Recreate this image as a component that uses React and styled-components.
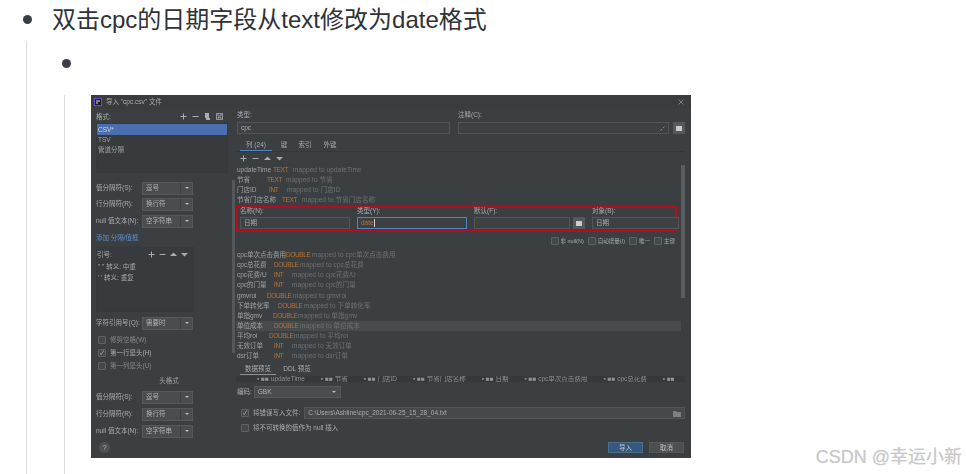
import React from 'react'
import styled, { createGlobalStyle } from 'styled-components'

const Global = createGlobalStyle`
  html, body { margin: 0; padding: 0; background: #fff; }
  body {
    width: 966px;
    height: 474px;
    overflow: hidden;
    font-family: "Liberation Sans", "Noto Sans CJK SC", sans-serif;
  }
`

const Page = styled.div`
  position: relative;
  width: 966px;
  height: 474px;
  overflow: hidden;
`

const Item = styled.div`
  display: flex;
  align-items: center;
  height: ${p => p.$h}px;
  color: #2f3237;
  font-size: 24px;
  span { padding-bottom: 3px; }
`

const Bullet = styled.i`
  flex: none;
  width: 9px;
  height: 9px;
  border-radius: 50%;
  background: #3a3f45;
  margin-left: ${p => p.$ml}px;
  margin-right: 20px;
`

const Quote = styled.div`
  margin-left: ${p => p.$ml}px;
  margin-top: ${p => p.$mt}px;
  border-left: 1px solid #dcdcdc;
  height: 500px;
`

const Dialog = styled.div`
  width: 600px;
  height: 363px;
  margin-left: 26px;
  margin-top: 10px;
  background: #3c3f41;
  color: #a9acae;
  font-size: 6.5px;
  line-height: 10px;
  display: flex;
  flex-direction: column;
  filter: blur(0.45px);
`

const TitleBar = styled.div`
  flex: none;
  height: 14px;
  display: flex;
  align-items: center;
  gap: 4px;
  padding: 0 7px 0 3px;
  background: #3a3c3e;
  span { flex: 1; }
`

const Body = styled.div`
  flex: none;
  height: 331px;
  display: flex;
`

const LeftCol = styled.div`
  flex: none;
  width: 141px;
  box-sizing: border-box;
  padding: 0 4px 0 5px;
  display: flex;
  flex-direction: column;
`

const Track = styled.div`
  flex: none;
  width: 3px;
  margin-right: 1px;
  i {
    display: block;
    margin-top: 71px;
    height: 173px;
    background: #55585a;
  }
`

const RightCol = styled.div`
  position: relative;
  flex: 1;
  min-width: 0;
  padding-right: 6px;
  display: flex;
  flex-direction: column;
`

const RightThumb = styled.i`
  position: absolute;
  top: 56px;
  right: 6px;
  width: 4px;
  height: 133px;
  background: #5a5d5f;
`

const Head = styled.div`
  flex: none;
  height: 13px;
  margin-top: ${p => p.$mt || 0}px;
  display: flex;
  align-items: center;
  justify-content: space-between;
  padding-right: ${p => p.$pr || 0}px;
`

const Tools = styled.div`
  display: flex;
  align-items: center;
  gap: ${p => p.$gap || 5}px;
  color: #a9adb0;
  margin-left: ${p => p.$ml || 0}px;
`

const ListBox = styled.div`
  flex: none;
  height: 50px;
  background: #383b3d;
  border: 1px solid #36393a;
  box-sizing: border-box;
`

const ListRow = styled.div`
  height: ${p => (p.$on ? 11 : 10)}px;
  line-height: ${p => (p.$on ? 11 : 10)}px;
  padding-left: 1px;
  background: ${p => (p.$on ? '#4b6eaf' : 'transparent')};
  color: ${p => (p.$on ? '#cdd4e0' : '#a0a3a5')};
`

const FormRow = styled.div`
  flex: none;
  height: 14px;
  margin-top: ${p => p.$mt}px;
  display: flex;
  align-items: center;
  label { width: 46px; flex: none; }
`

const Select = styled.div`
  flex: none;
  box-sizing: border-box;
  width: ${p => p.$w || 51}px;
  height: ${p => p.$h || 13}px;
  background: #4a4d4f;
  border: 1px solid #56595b;
  display: flex;
  align-items: center;
  padding-left: 3px;
  color: #b0b3b5;
  span { flex: 1; }
  b {
    width: 11px;
    height: 100%;
    flex: none;
    border-left: 1px solid ${p => (p.$plain ? 'transparent' : '#3c3f41')};
    display: flex;
    align-items: center;
    justify-content: center;
  }
  b::after {
    content: "";
    border-left: 2.5px solid transparent;
    border-right: 2.5px solid transparent;
    border-top: 2.5px solid #b9bcbe;
  }
`

const LinkRow = styled.div`
  flex: none;
  height: 10px;
  margin-top: 5px;
  color: #5b8fc9;
`

const QuoteBox = styled.div`
  flex: none;
  height: 65px;
  width: 98px;
  margin-top: 4px;
  box-sizing: border-box;
  padding: 0 5px 0 0;
  background: #383b3d;
  border: 1px solid #36393a;
`

const QuoteRow = styled.div`
  height: 11px;
  line-height: 11px;
  padding-left: 1px;
`

const CheckRow = styled.div`
  flex: none;
  height: ${p => p.$h || 10}px;
  margin-top: ${p => p.$mt}px;
  padding-left: ${p => p.$pl || 0}px;
  display: flex;
  align-items: center;
  gap: 4px;
  color: ${p => (p.$dim ? '#85888a' : '#a9acae')};
`

const Box = styled.i`
  flex: none;
  width: 6px;
  height: 6px;
  border: 1px solid #5f6264;
  background: #45484a;
  border-radius: 1px;
  color: #c2c5c7;
  font-size: 6px;
  line-height: 6px;
  font-style: normal;
  text-align: center;
`

const Caption = styled.div`
  flex: none;
  height: 10px;
  margin-top: 5px;
  text-align: center;
  padding-left: 14px;
  color: #a0a3a5;
`

const Footer = styled.div`
  flex: none;
  height: 18px;
  box-sizing: border-box;
  padding: 2px 7px 0 8px;
  display: flex;
  align-items: flex-start;
  justify-content: space-between;
`

const Help = styled.div`
  width: 11px;
  height: 11px;
  border-radius: 50%;
  background: #4d5153;
  color: #a9adb0;
  font-size: 8px;
  line-height: 11px;
  text-align: center;
`

const Buttons = styled.div`
  display: flex;
  gap: 6px;
`

const Button = styled.div`
  width: 35px;
  height: 11px;
  line-height: 10px;
  text-align: center;
  background: ${p => (p.$primary ? '#365880' : '#4c5052')};
  border: 1px solid ${p => (p.$primary ? '#4c708c' : '#55585a')};
  box-sizing: border-box;
  color: #bfc2c4;
`

const FieldGrid = styled.div`
  flex: none;
  display: grid;
  grid-template-columns: 213px 211px 12px;
  column-gap: 8px;
  margin-top: ${p => p.$mt || 0}px;
  padding-left: 1px;
  height: ${p => p.$h}px;
  align-items: center;
  & > :nth-child(3) { margin-left: -4px; }
`

const Input = styled.div`
  box-sizing: border-box;
  height: 12px;
  line-height: 10px;
  padding: 0 3px;
  background: #3e4143;
  border: 1px solid ${p => (p.$focus ? '#4a88c7' : '#525557')};
  display: flex;
  align-items: center;
  justify-content: space-between;
  color: ${p => (p.$orange ? '#b5722f' : '#a9acae')};
  min-width: 0;
`

const IconBtn = styled.div`
  width: 12px;
  height: 12px;
  background: #55595b;
  display: flex;
  align-items: center;
  justify-content: center;
  i { width: 6px; height: 5px; background: #c9cccd; display: block; }
`

const Tabs = styled.div`
  flex: none;
  height: 12px;
  margin-top: ${p => p.$mt}px;
  padding-left: 4px;
  display: flex;
  gap: ${p => p.$gap}px;
  border-bottom: ${p => (p.$line ? '1px solid #353739' : 'none')};
`

const Tab = styled.div`
  width: ${p => p.$w}px;
  text-align: center;
  line-height: 11px;
  height: 11px;
  border-bottom: 1.5px solid transparent;
  border-color: ${p => (p.$on ? (p.$grey ? '#8c8f91' : '#4a88c7') : 'transparent')};
`

const Toolbar = styled.div`
  flex: none;
  height: 12px;
  padding-left: 4px;
  display: flex;
  align-items: center;
  border-bottom: 1px solid #393c3e;
`

const Columns = styled.div`
  flex: none;
  margin-top: ${p => p.$mt}px;
  height: ${p => p.$h}px;
  overflow: hidden;
`

const ColRow = styled.div`
  height: ${p => p.$step}px;
  line-height: ${p => p.$step}px;
  padding-left: 1px;
  display: flex;
  white-space: nowrap;
  margin-right: 4px;
  background: ${p => (p.$on ? '#484b4d' : 'transparent')};
`

const ColName = styled.span`
  width: ${p => p.$w}px;
  flex: none;
  color: #a0a3a5;
`

const ColType = styled.span`
  width: ${p => p.$w}px;
  flex: none;
  color: #b5722f;
  letter-spacing: -0.4px;
`

const ColMap = styled.span`
  color: #6f7274;
  letter-spacing: 0.1px;
`

const RedBox = styled.div`
  flex: none;
  width: 441px;
  height: 26px;
  box-sizing: border-box;
  margin-top: 1px;
  border: 2px solid #bb0a1e;
  padding: 0 2px;
  display: grid;
  grid-template-columns: 110px 110px 96px 12px 83px;
  grid-template-rows: 9px 12px;
  column-gap: 7px;
  line-height: 6px;
  & > :nth-child(4), & > :nth-child(5) { margin-left: -4px; }
  & > :nth-child(9), & > :nth-child(10) { margin-left: -4px; }
`

const Options = styled.div`
  flex: none;
  height: 10px;
  margin-top: 4px;
  padding-right: 10px;
  display: flex;
  justify-content: flex-end;
  align-items: center;
  gap: 4px;
  font-size: 5.5px;
  span { display: flex; align-items: center; gap: 2px; }
`

const Caret = styled.span`
  display: inline-block;
  width: 1px;
  height: 8px;
  background: #d0d0d0;
  vertical-align: middle;
`

const Band = styled.div`
  flex: none;
  height: 6px;
  margin-top: 1px;
  background: #36383a;
  overflow: hidden;
  white-space: nowrap;
  padding-left: 21px;
  line-height: 6px;
  color: #8f9294;
  span { margin-right: 16px; }
`

const EncodingRow = styled.div`
  flex: none;
  height: 12px;
  margin-top: 4px;
  padding-left: 1px;
  display: flex;
  align-items: center;
  gap: 2px;
`

const PathRow = styled.div`
  flex: none;
  height: 12px;
  margin-top: 9px;
  padding-left: 5px;
  display: flex;
  align-items: center;
  gap: 4px;
`

const PathInput = styled(Input)`
  flex: 1;
  background: #45494b;
`

const Watermark = styled.div`
  position: absolute;
  right: 4px;
  bottom: 6px;
  font-size: 18px;
  line-height: 22px;
  color: #c8c8c8;
  text-shadow: 0 0 1px #ddd;
  white-space: nowrap;
`

const Plus = () => (
  <svg width="7" height="7" viewBox="0 0 7 7"><path d="M3.5 0.5v6M0.5 3.5h6" stroke="currentColor" strokeWidth="1" /></svg>
)
const Minus = () => (
  <svg width="7" height="7" viewBox="0 0 7 7"><path d="M0.5 3.5h6" stroke="currentColor" strokeWidth="1" /></svg>
)
const Up = () => (
  <svg width="7" height="7" viewBox="0 0 7 7"><path d="M3.5 1.5L7 5H0z" fill="currentColor" /></svg>
)
const Down = () => (
  <svg width="7" height="7" viewBox="0 0 7 7"><path d="M3.5 5.5L7 2H0z" fill="currentColor" /></svg>
)
const Copy = () => (
  <svg width="7" height="7" viewBox="0 0 7 7"><path d="M1 0h4v5H1zM2 5h4v2H2z" fill="currentColor" /></svg>
)
const Save = () => (
  <svg width="7" height="7" viewBox="0 0 7 7"><path d="M0.5 0.5h6v6h-6zM2 1v2h3V1M2 6V4.5h3V6" fill="none" stroke="currentColor" strokeWidth="0.8" /></svg>
)
const AppIcon = () => (
  <svg width="8" height="8" viewBox="0 0 8 8">
    <rect width="8" height="8" fill="#6b4fc8" />
    <rect x="1" y="1" width="6" height="6" fill="#1c1c24" />
    <path d="M2 3h4M2 5h2" stroke="#e0e0e0" strokeWidth="1" />
  </svg>
)
const CloseIcon = () => (
  <svg width="6" height="6" viewBox="0 0 6 6"><path d="M0.5 0.5l5 5M5.5 0.5l-5 5" stroke="#8b8e90" strokeWidth="0.8" /></svg>
)
const Expand = () => (
  <svg width="5" height="5" viewBox="0 0 5 5"><path d="M0.5 4.5l1.5-1.5M4.5 0.5L3 2" stroke="#9a9d9f" strokeWidth="0.8" /></svg>
)
const Folder = () => (
  <svg width="8" height="7" viewBox="0 0 8 7"><path d="M0 1h3l1 1h4v5H0z" fill="#7c8083" /></svg>
)

const topCols = [
  ['updateTime', 'TEXT', 36, 20, 'updateTime'],
  ['节省', 'TEXT', 30, 19, '节省'],
  ['门店ID', 'INT', 32, 18, '门店ID'],
  ['节省门店名称', 'TEXT', 45, 20, '节省门店名称'],
]

const bottomCols = [
  ['cpc单次点击费用', 'DOUBLE', 49, 26, 'cpc单次点击费用'],
  ['cpc总花费', 'DOUBLE', 37, 26, 'cpc总花费'],
  ['cpc花费/U', 'INT', 37, 18, 'cpc花费/U'],
  ['cpc的门量', 'INT', 37, 18, 'cpc的门量'],
  ['gmvroi', 'DOUBLE', 30, 26, 'gmvroi'],
  ['下单转化率', 'DOUBLE', 41, 26, '下单转化率'],
  ['单指gmv', 'DOUBLE', 36, 25, '单指gmv'],
  ['单位成本', 'DOUBLE', 37, 26, '单位成本', true],
  ['平均roi', 'DOUBLE', 32, 25, '平均roi'],
  ['无效订单', 'INT', 37, 18, '无效订单'],
  ['dsr订单', 'INT', 37, 18, 'dsr订单'],
]

const ColumnRow = ({ col, step }) => (
  <ColRow $step={step} $on={col[5]}>
    <ColName $w={col[2]}>{col[0]}</ColName>
    <ColType $w={col[3]}>{col[1]}</ColType>
    <ColMap>mapped to {col[4]}</ColMap>
  </ColRow>
)

const SelectRow = ({ label, value, mt }) => (
  <FormRow $mt={mt}>
    <label>{label}</label>
    <Select><span>{value}</span><b /></Select>
  </FormRow>
)

export default function App() {
  return (
    <Page>
      <Global />
      <Item $h={38}>
        <Bullet $ml={23} />
        <span>双击cpc的日期字段从text修改为date格式</span>
      </Item>
      <Quote $ml={26} $mt={3}>
        <Item $h={44}>
          <Bullet $ml={35} />
        </Item>
        <Quote $ml={37} $mt={0}>
          <Dialog>
            <TitleBar>
              <AppIcon />
              <span>导入 "cpc.csv" 文件</span>
              <CloseIcon />
            </TitleBar>
            <Body>
              <LeftCol>
                <Head $mt={1} $pr={5}>
                  <span>格式:</span>
                  <Tools><Plus /><Minus /><Copy /><Save /></Tools>
                </Head>
                <ListBox>
                  <ListRow $on>CSV*</ListRow>
                  <ListRow>TSV</ListRow>
                  <ListRow>管道分隔</ListRow>
                </ListBox>
                <SelectRow mt={8} label="值分隔符(S):" value="逗号" />
                <SelectRow mt={2} label="行分隔符(R):" value="换行符" />
                <SelectRow mt={3} label="null 值文本(N):" value="空字符串" />
                <LinkRow>添加 分隔/值框</LinkRow>
                <QuoteBox>
                  <Head $pr={0}>
                    <span>引号:</span>
                    <Tools $gap={4}><Plus /><Minus /><Up /><Down /></Tools>
                  </Head>
                  <QuoteRow>" " 转义: 中重</QuoteRow>
                  <QuoteRow>' ' 转义: 重复</QuoteRow>
                </QuoteBox>
                <FormRow $mt={4}>
                  <label>字符引用号(Q):</label>
                  <Select><span>需要时</span><b /></Select>
                </FormRow>
                <CheckRow $mt={5} $pl={2} $dim><Box />修剪空格(W)</CheckRow>
                <CheckRow $mt={3} $pl={2}><Box>✓</Box>第一行是头(H)</CheckRow>
                <CheckRow $mt={3} $pl={2} $dim><Box />第一列是头(U)</CheckRow>
                <Caption>头格式</Caption>
                <SelectRow mt={4} label="值分隔符(S):" value="逗号" />
                <SelectRow mt={3} label="行分隔符(R):" value="换行符" />
                <SelectRow mt={3} label="null 值文本(N):" value="空字符串" />
              </LeftCol>
              <Track><i /></Track>
              <RightCol>
                <RightThumb />
                <FieldGrid $h={10} $mt={1}>
                  <span>类型:</span>
                  <span>注释(C):</span>
                  <span />
                </FieldGrid>
                <FieldGrid $h={12} $mt={2}>
                  <Input>cpc</Input>
                  <Input><span /><Expand /></Input>
                  <IconBtn><i /></IconBtn>
                </FieldGrid>
                <Tabs $mt={5} $gap={6} $line>
                  <Tab $w={32} $on>列 (24)</Tab>
                  <Tab $w={12}>键</Tab>
                  <Tab $w={18}>索引</Tab>
                  <Tab $w={20}>外键</Tab>
                </Tabs>
                <Toolbar>
                  <Tools $gap={5}><Plus /><Minus /><Up /><Down /></Tools>
                </Toolbar>
                <Columns $mt={0} $h={40}>
                  {topCols.map(c => <ColumnRow key={c[0]} col={c} step={10} />)}
                </Columns>
                <RedBox>
                  <span>名称(N):</span>
                  <span>类型(Y):</span>
                  <span>默认(F):</span>
                  <span />
                  <span>对象(B):</span>
                  <Input>日期</Input>
                  <Input $focus $orange><span>date<Caret /></span></Input>
                  <Input />
                  <IconBtn><i /></IconBtn>
                  <Input>日期</Input>
                </RedBox>
                <Options>
                  <span><Box />非 null(N)</span>
                  <span><Box />自动增量(I)</span>
                  <span><Box />唯一</span>
                  <span><Box />主键</span>
                </Options>
                <Columns $mt={4} $h={110}>
                  {bottomCols.map(c => <ColumnRow key={c[0]} col={c} step={10.15} />)}
                </Columns>
                <Tabs $mt={3} $gap={4}>
                  <Tab $w={36} $on $grey>数据预览</Tab>
                  <Tab $w={34}>DDL 预览</Tab>
                </Tabs>
                <Band>
                  <span>▪ ■■ updateTime</span>
                  <span>▪ ■■ 节省</span>
                  <span>▪ ■■ 门店ID</span>
                  <span>▪ ■■ 节省门店名称</span>
                  <span>▪ ■■ 日期</span>
                  <span>▪ ■■ cpc单次点击费用</span>
                  <span>▪ ■■ cpc总花费</span>
                  <span>▪ ■■</span>
                </Band>
                <EncodingRow>
                  <span>编码:</span>
                  <Select $w={87} $h={12} $plain><span>GBK</span><b /></Select>
                </EncodingRow>
                <PathRow>
                  <Box>✓</Box>
                  <span>将错误写入文件:</span>
                  <PathInput>
                    <span>C:\Users\Ashline\cpc_2021-06-25_15_28_04.txt</span>
                    <Folder />
                  </PathInput>
                </PathRow>
                <CheckRow $mt={4} $pl={5}><Box />将不可转换的值作为 null 插入</CheckRow>
              </RightCol>
            </Body>
            <Footer>
              <Help>?</Help>
              <Buttons>
                <Button $primary>导入</Button>
                <Button>取消</Button>
              </Buttons>
            </Footer>
          </Dialog>
        </Quote>
      </Quote>
      <Watermark>CSDN @幸运小新</Watermark>
    </Page>
  )
}
